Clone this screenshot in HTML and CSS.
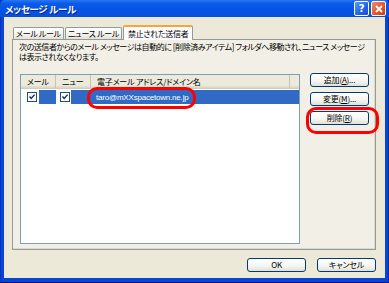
FILE: index.html
```html
<!DOCTYPE html>
<html lang="ja">
<head>
    <meta charset="UTF-8">
    <title>メッセージ ルール</title>
    <link rel="stylesheet" href="styles.css">
</head>
<body>

    <div class="window">
        <!-- Title Bar -->
        <div class="titlebar">
            <span class="title">メッセージ ルール</span>
            <div class="title-buttons">
                <span class="tbtn help">?</span>
                <span class="tbtn close">
                    <svg width="8" height="8" viewBox="0 0 8 8"><path d="M1 1 L7 7 M7 1 L1 7" stroke="#fff" stroke-width="1.8" fill="none"/></svg>
                </span>
            </div>
        </div>

        <div class="client">
            <!-- Tabs -->
            <div class="tabs">
                <div class="tab">メール ルール</div>
                <div class="tab">ニュース ルール</div>
                <div class="tab active">禁止された送信者</div>
            </div>

            <!-- Tab Panel -->
            <div class="panel">
                <p class="desc">次の送信者からのメール メッセージは自動的に [削除済みアイテム] フォルダへ移動され、ニュース メッセージ<br>は表示されなくなります。</p>

                <div class="panel-body">
                    <div class="list">
                        <div class="list-head">
                            <span class="col col-mail">メール</span>
                            <span class="col col-news">ニュー</span>
                            <span class="col col-addr">電子メール アドレス/ドメイン名</span>
                            <span class="col col-rest"></span>
                        </div>
                        <div class="list-row">
                            <span class="cell cell-mail"><span class="check"></span><span class="sel sel-short"></span></span>
                            <span class="cell cell-news"><span class="check"></span><span class="sel"></span></span>
                            <span class="cell cell-addr sel">taro@mXXspacetown.ne.jp</span>
                        </div>
                    </div>

                    <div class="side-buttons">
                        <button class="btn">追加(<u>A</u>)...</button>
                        <button class="btn">変更(<u>M</u>)...</button>
                        <button class="btn">削除(<u>R</u>)</button>
                    </div>
                </div>
            </div>

            <!-- Dialog Buttons -->
            <div class="footer">
                <button class="btn">OK</button>
                <button class="btn">キャンセル</button>
            </div>
        </div>

        <!-- Red highlight marks -->
        <div class="mark mark-email"></div>
        <div class="mark mark-delete"></div>
    </div>

</body>
</html>
```

FILE: styles.css
```css
/* Page */
body {
    margin: 0;
    background-color: #fff;
    font-family: "Noto Sans CJK JP", "Noto Sans", sans-serif;
    font-size: 8px;
    letter-spacing: -0.2px;
    font-feature-settings: "palt";
    color: #000;
}

/* Window Frame */
.window {
    position: relative;
    width: 389px;
    height: 283px;
    box-sizing: border-box;
    display: flex;
    flex-direction: column;
    background-color: #0845d6;
    padding: 0 3px 4px 3px;
    border-left: 1px solid #0a33b8;
    border-right: 1px solid #0a2c9e;
    border-bottom: 1px solid #00138c;
}

/* Title Bar */
.titlebar {
    height: 20px;
    margin: 0 -4px;
    padding: 0 4px 0 5px;
    display: flex;
    align-items: center;
    justify-content: space-between;
    background: linear-gradient(#2a77f0 0%, #0a5be8 20%, #0454e3 60%, #0a4fd8 100%);
    border-radius: 5px 5px 0 0;
}

.title {
    color: #fff;
    font-weight: bold;
    font-size: 9.5px;
    letter-spacing: -0.3px;
    text-shadow: 1px 1px 0 #0a1f7c;
}

.title-buttons {
    display: flex;
    gap: 2px;
    margin-right: -1px;
}

.tbtn {
    width: 13px;
    height: 13px;
    display: flex;
    align-items: center;
    justify-content: center;
    border: 1px solid #fff;
    border-radius: 2px;
    color: #fff;
    font-family: "DejaVu Sans", sans-serif;
    font-weight: bold;
    font-size: 10px;
}

.help {
    background: linear-gradient(135deg, #5f9bff, #2461e8 60%, #1d4fd0);
}

.close {
    background: linear-gradient(135deg, #f0886a, #e2542a 60%, #c43d12);
}

/* Client Area */
.client {
    flex: 1;
    display: flex;
    flex-direction: column;
    background-color: #ece9d8;
    padding: 8px 9px 6px 8px;
}

/* Tabs */
.tabs {
    display: flex;
    align-items: flex-end;
    height: 14px;
    padding-left: 1px;
    position: relative;
    z-index: 1;
}

.tab {
    height: 11px;
    line-height: 11px;
    padding: 0 2px;
    margin-right: 1px;
    border: 1px solid #919b9c;
    border-bottom: none;
    border-radius: 2px 2px 0 0;
    background: linear-gradient(#fff, #f3f2ec 60%, #e4e2d6);
    white-space: nowrap;
    letter-spacing: -0.3px;
    box-sizing: content-box;
}

.tab.active {
    height: 13px;
    line-height: 14px;
    padding: 0 4px;
    margin: 0 0 -1px 0;
    border-top: 2px solid #f6a637;
    background: #fcfcfe;
}

/* Tab Panel */
.panel {
    height: 207px;
    border: 1px solid #919b9c;
    background-color: #f2f0e6;
    box-shadow: inset -1px -1px 0 #dcd9c9;
    padding: 2px 6px 0 6px;
}

.desc {
    margin: 0;
    line-height: 10px;
    letter-spacing: -0.45px;
    white-space: nowrap;
}

.panel-body {
    display: flex;
    gap: 10px;
    margin-top: 12px;
    margin-left: 1px;
}

/* List View */
.list {
    width: 281px;
    height: 168px;
    border: 1px solid #7f9db9;
    background-color: #fff;
}

.list-head {
    display: flex;
    height: 13px;
    background: linear-gradient(#ebeadb 80%, #d6d3c4);
    border-bottom: 1px solid #d0cdbc;
}

.col {
    line-height: 13px;
    padding-left: 6px;
    border-right: 1px solid #c7c5b2;
    box-sizing: border-box;
    white-space: nowrap;
    overflow: hidden;
}

.col-mail { width: 35px; }
.col-news { width: 35px; }
.col-addr { width: 199px; }
.col-rest { flex: 1; border-right: none; }

.list-row {
    display: flex;
    height: 14px;
    margin-top: 1px;
}

.cell {
    display: flex;
    align-items: center;
    height: 14px;
}

.cell-mail {
    width: 35px;
    padding-left: 6px;
    box-sizing: border-box;
}

.cell-news {
    width: 35px;
    padding-left: 4px;
    box-sizing: border-box;
}

.cell-addr {
    width: 199px;
    padding-left: 5px;
    box-sizing: border-box;
    color: #fff;
    font-family: "Liberation Sans", sans-serif;
    font-size: 8px;
    letter-spacing: -0.2px;
}

.sel {
    background-color: #316ac5;
    height: 14px;
    flex: 1;
}

.sel-short {
    margin-left: 1px;
}

.check {
    width: 8px;
    height: 8px;
    border: 1px solid #1c5180;
    background: #fff url("data:image/svg+xml;utf8,<svg xmlns='http://www.w3.org/2000/svg' width='8' height='8'><path d='M1.5 3.5 L3.2 5.5 L6.6 1.6' stroke='%23142c5c' stroke-width='1.4' fill='none'/></svg>") no-repeat center;
    margin-right: 1px;
}

/* Buttons */
.side-buttons {
    display: flex;
    flex-direction: column;
    gap: 5px;
    margin-top: -1px;
}

.btn {
    width: 59px;
    height: 14px;
    padding: 0;
    font-family: inherit;
    font-size: 8px;
    letter-spacing: -0.2px;
    font-feature-settings: "palt";
    line-height: 12px;
    color: #000;
    border: 1px solid #003c74;
    border-radius: 3px;
    background: linear-gradient(#fff, #f4f4f0 60%, #e2e0d6);
}

.btn u {
    text-underline-offset: 1px;
}

/* Footer */
.footer {
    display: flex;
    justify-content: flex-end;
    gap: 11px;
    margin-top: 8px;
}

/* Red highlight marks */
.mark {
    position: absolute;
    border: 3px solid #f00;
    border-radius: 10px;
    box-sizing: border-box;
}

.mark-email {
    left: 86px;
    top: 87px;
    width: 109px;
    height: 22px;
}

.mark-delete {
    left: 305px;
    top: 107px;
    width: 73px;
    height: 27px;
}
```
